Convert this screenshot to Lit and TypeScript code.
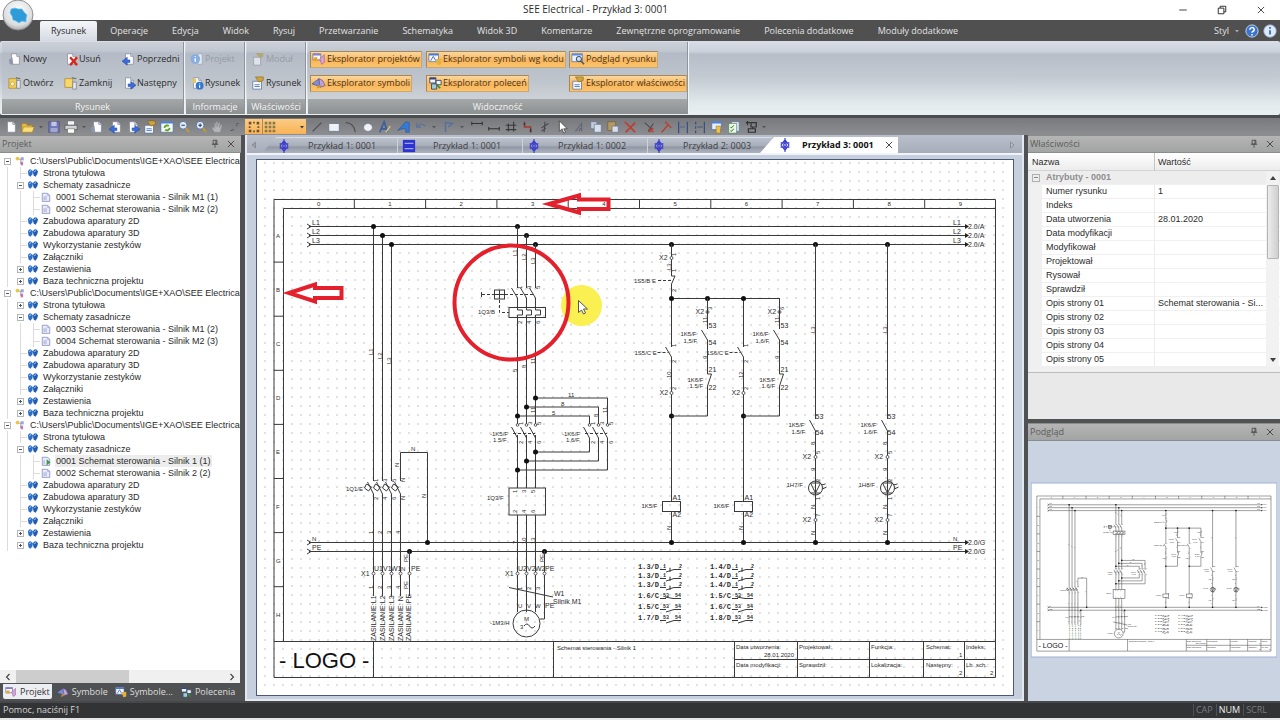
import { LitElement, html, svg, css, nothing, TemplateResult } from "lit";
import { customElement, property } from "lit/decorators.js";
import { classMap } from "lit/directives/class-map.js";

type Frag = TemplateResult<2>;

/* ------------------------------------------------------------------ icons */

const page = svg`<path d="M4 2h6l3 3v9H4z" fill="#fdfdff" stroke="#7f8596" stroke-width=".8"/><path d="M10 2v3h3" fill="#d5dbe8" stroke="#7f8596" stroke-width=".8"/>`;
const blueArrow = svg`<path d="M7 9h3V6l6 4.500-6 4.500v-3H7z" fill="#3a6cd8" stroke="#173a94" stroke-width=".5"/>`;
const blueBack = svg`<path d="M9 9H6V6L0 10.500 6 15v-3h3z" fill="#3a6cd8" stroke="#173a94" stroke-width=".5"/>`;
const folder = svg`<path d="M1 4h5l1 2h6v8H1z" fill="#e9b93e" stroke="#a07a1c" stroke-width=".7"/><path d="M3 8h12l-2 6H1z" fill="#f9dd7c" stroke="#a07a1c" stroke-width=".6"/>`;
const diamond = svg`<path d="M8 0v16M3 5.500h10M3 10.500h10M8 2l4.500 6-4.500 6-4.500-6z" fill="none" stroke="#3a3ccf" stroke-width="1.300"/><circle cx="8" cy="8" r="2" fill="none" stroke="#3a3ccf"/>`;

const ICONS: Record<string, Frag> = {
  page,
  open: folder,
  newDoc: svg`${page}<path d="M1 9l4-3 1 8-4 0z" fill="#8f96a8"/>`,
  remove: svg`${page}<path d="M7 6l8 9M15 6l-8 9" stroke="#d8261c" stroke-width="2.600"/>`,
  prev: svg`${page}${blueBack}`,
  next: svg`${page}${blueArrow}`,
  openPrj: svg`<path d="M1 3h9v11H1z" fill="#f2cd58" stroke="#a88424" stroke-width=".8"/><circle cx="5" cy="9" r="2.300" fill="#fff6c8" stroke="#a88424" stroke-width=".6"/><path d="M10 5h4v9h-4z" fill="#e8ecf4" stroke="#6e7688" stroke-width=".8"/><path d="M9 2l5 1" stroke="#555"/>`,
  closePrj: svg`<path d="M1 3h9v10H1z" fill="#f7d866" stroke="#a88424" stroke-width=".8"/><path d="M10 7h4v8h-4z" fill="#e8ecf4" stroke="#6e7688" stroke-width=".8"/><path d="M9 2l5 1" stroke="#555"/>`,
  infoGray: svg`<path d="M9 2h5v12H9z" fill="#e3e8f0" stroke="#9aa4b8" stroke-width=".8"/><circle cx="6" cy="8" r="5.500" fill="#86aede"/><path d="M6 7v4M6 4.500v1" stroke="#fff" stroke-width="1.600"/>`,
  infoDoc: svg`${page}<path d="M3 3h4v5H3z" fill="#e6c75a"/><circle cx="11" cy="11" r="4.500" fill="#3577cf"/><path d="M11 10.500v3M11 8.500v1" stroke="#fff" stroke-width="1.400"/>`,
  propGray: svg`<path d="M3 6h8v9H3z" fill="#dfe3ea" stroke="#9096a2" stroke-width=".8"/><path d="M5 1h9v4l-4 2z" fill="#b0a878"/>`,
  prop: svg`<path d="M2 6h10v9H2z" fill="#f5f8fd" stroke="#52678f" stroke-width=".8"/><path d="M5 1h9v4L9 7z" fill="#d2a437" stroke="#7a5a14" stroke-width=".6"/><path d="M4 10h6M4 12h6" stroke="#4a78c8"/>`,
  expPrj: svg`<path d="M1 2h9v7H1z" fill="#f6f8ff" stroke="#54688f" stroke-width=".8"/><path d="M1 2h9v2H1z" fill="#8a7ad8"/><path d="M2 6h4v4H2z" fill="#e2a62c"/><path d="M9 8l5-5v9l-3 2z" fill="#d7a2d8" stroke="#8a5490" stroke-width=".6"/>`,
  expSym: svg`<path d="M0 9l8-6 1 9z" fill="#7f8ed4" stroke="#384a9a" stroke-width=".7"/><path d="M8 3l4 2 3 6-6 2z" fill="#b9a4dd" stroke="#5a4490" stroke-width=".7"/><path d="M6 14l4-4" stroke="#d29a22" stroke-width="2"/>`,
  expCode: svg`<path d="M1 2h11v9H1z" fill="#f3f7ff" stroke="#4d6fa8" stroke-width=".8"/><path d="M1 2h11v2H1z" fill="#4a7ad8"/><path d="M3 10l3-5 3 5" fill="none" stroke="#3d62b4"/><path d="M9 8h6v6l-4 1z" fill="#e4b23a"/>`,
  expCmd: svg`<path d="M2 2h7v6H2zM9 5h6v5H9z" fill="#eef2fa" stroke="#39465f" stroke-width="1"/><path d="M2 2h7v2H2z" fill="#33457c"/><path d="M4 9h6v6H4z" fill="#9fcbe0" stroke="#39465f"/><path d="M10 10l4 4" stroke="#3d8a2a" stroke-width="2"/>`,
  preview: svg`<path d="M1 2h12v9H1z" fill="#eaf2ff" stroke="#506fa5" stroke-width=".8"/><path d="M1 2h12v2H1z" fill="#5f8ade"/><circle cx="9" cy="8" r="3" fill="#bfe0f6" stroke="#334"/><path d="M11 10l4 4" stroke="#555" stroke-width="1.800"/>`,
  save: svg`<path d="M2 2h12v12H2z" fill="#6e76b8" stroke="#4a4f86" stroke-width=".8"/><path d="M5 2h6v5H5z" fill="#c2c6e0"/><path d="M4 9h8v5H4z" fill="#a2a7d0"/>`,
  print: svg`<path d="M4 1h8v5H4z" fill="#f6f6f6" stroke="#555" stroke-width=".6"/><path d="M1 6h14v5H1z" fill="#d0d2d8" stroke="#4b4b4b" stroke-width=".8"/><path d="M4 10h8v5H4z" fill="#fff" stroke="#555" stroke-width=".6"/>`,
  refresh: svg`<path d="M1 2h14v12H1z" fill="#f4faf4" stroke="#4a70a8" stroke-width=".8"/><path d="M1 2h14v2H1z" fill="#4d80dc"/><path d="M5 9a3 3 0 0 1 5-2M11 9a3 3 0 0 1-5 2" fill="none" stroke="#5ea021" stroke-width="2"/>`,
  zoomOut: svg`<circle cx="7" cy="6" r="4.500" fill="#dcebfb" stroke="#4f6998"/><path d="M10 9l4 5" stroke="#c49a3a" stroke-width="2"/><path d="M5 6h4" stroke="#223"/>`,
  zoomIn: svg`<circle cx="7" cy="6" r="4.500" fill="#dcebfb" stroke="#4f6998"/><path d="M10 9l4 5" stroke="#c49a3a" stroke-width="2"/><path d="M5 6h4M7 4v4" stroke="#223"/>`,
  hand: svg`<path d="M4 14l-3-5 1-1 2 2V4l1-1 1 5V2l1.500 0v6l1-5 1.500 0-.5 6 2-4 1 1-2 8z" fill="#b5b5b8" stroke="#8f8f94" stroke-width=".4"/>`,
  fit: svg`<path d="M3 12h3v-3M10 7V4h3" fill="none" stroke="#4b4b4d" stroke-dasharray="2 1"/>`,
  snap: svg`<path d="M2 2h3v3H2zM7 2h2v2H7zM11 2h3v3h-3zM2 11h3v3H2zM11 11h3v3h-3zM7 12h2v2H7zM2 7h2v2H2zM12 7h2v2h-2z" fill="#6a5238"/>`,
  grid: svg`<path d="M2 2h3v3H2zM6.500 2h3v3h-3zM11 2h3v3h-3zM2 6.500h3v3H2zM6.500 6.500h3v3h-3zM11 6.500h3v3h-3zM2 11h3v3H2zM6.500 11h3v3h-3zM11 11h3v3h-3z" fill="#857a4c"/>`,
  line: svg`<path d="M3 13L13 3" stroke="#4d4e52" stroke-width="1.400"/>`,
  rect: svg`<path d="M2 4h12v9H2z" fill="#eef1f6" stroke="#5f6b86" stroke-width=".8"/>`,
  arc: svg`<path d="M2 3q9 0 11 11" fill="none" stroke="#4d4e52" stroke-width="1.200"/>`,
  ellipse: svg`<ellipse cx="8" cy="8.500" rx="5" ry="4.500" fill="#eff2f7" stroke="#5f6b86" stroke-width=".6"/>`,
  textEdit: svg`<path d="M2 14L7 2l4 12M4 10h6" fill="none" stroke="#3c5f9c" stroke-width="2"/><path d="M9 14l5-7" stroke="#d8c27c" stroke-width="1.600"/>`,
  textFill: svg`<path d="M1 12L10 2l4 1v11h-4v-4H6z" fill="#3579d4" stroke="#1f4f9c" stroke-width=".6"/>`,
  undo: svg`<path d="M3 3v5h5M3 8q5-6 10-1" fill="none" stroke="#5f7299" stroke-width="1.600"/>`,
  redo: svg`<path d="M4 14V3l8 1-5 4" fill="none" stroke="#55709f" stroke-width="1.600"/>`,
  wireTop: svg`<path d="M2 4h12M2 2v4M14 2v4" stroke="#333" stroke-width="1.300"/>`,
  wireLow: svg`<path d="M2 10h12M2 8v4M14 8v4" stroke="#333" stroke-width="1.300"/>`,
  wire3: svg`<path d="M2 6h12M2 11h12M5 4v9M11 2v11" stroke="#3a3a3c" stroke-width="1.300"/>`,
  step: svg`<path d="M4 2v6h7v6" fill="none" stroke="#a23a30" stroke-width="1.600"/><path d="M4 3v3M11 10v4" stroke="#333" stroke-width="1.600"/>`,
  cut: svg`<path d="M8 2L7 14M4 9l8-5M4 13l5-4" stroke="#43464e" stroke-width="1.200"/>`,
  cursor: svg`<path d="M5 1v12l3-3 2 5 2-1-2-4h4z" fill="#fff" stroke="#333" stroke-width=".8"/>`,
  mirror: svg`<path d="M4 13L11 4v9M8 13l2-4" fill="none" stroke="#62687a" stroke-width="1.300"/>`,
  copy: svg`<path d="M2 2h7v8H2z" fill="#c3cad8" stroke="#5f7096" stroke-width=".7"/><path d="M6 5h8v9H6z" fill="#d9dfea" stroke="#5f7096" stroke-width=".7"/>`,
  paste: svg`<path d="M2 2h9v10H2z" fill="#b39a62" stroke="#6f5a2a" stroke-width=".7"/><path d="M7 7h7v7H7z" fill="#d9dfea" stroke="#5f7096" stroke-width=".7"/>`,
  redX: svg`<path d="M2 2l12 12M14 3L3 14" stroke="#bf3c30" stroke-width="2"/>`,
  crossDel: svg`<path d="M3 3l9 8M13 4L7 13" stroke="#4a4c50" stroke-width="1.300"/><path d="M8 9l5 5M13 9l-5 5" stroke="#bf3c30" stroke-width="1.600"/>`,
  tee: svg`<path d="M3 14l8-9M7 2l7 7" stroke="#bf3c30" stroke-width="1.600"/>`,
  alignA: svg`<path d="M3 2v13M13 2v13" stroke="#34508c" stroke-width="1.400"/><path d="M5 8h6" stroke="#34508c" stroke-dasharray="2 1"/>`,
  alignB: svg`<path d="M3 2v3M3 7v3M3 12v3M13 2v13" stroke="#34508c" stroke-width="1.400"/><path d="M5 8h6" stroke="#34508c"/>`,
  db: svg`<path d="M2 2h11v9H2z" fill="#e6effb" stroke="#446dab" stroke-width=".8"/><path d="M2 2h11v2H2z" fill="#4d80dc"/><path d="M7 7h5v8H7z" fill="#ecc04a" stroke="#93701a" stroke-width=".6"/>`,
  check: svg`<path d="M5 2h9v11H5z" fill="#dfe7f5" stroke="#446dab" stroke-width=".7"/><path d="M2 4h9v11H2z" fill="#eff8ef" stroke="#4b7b4b" stroke-width=".7"/><path d="M4 8l1 1 3-3M4 12l1 1 3-3" fill="none" stroke="#3f9a30" stroke-width="1.200"/>`,
  plug: svg`<path d="M2 3h5M4 1v5M8 3h6v5H8zM5 10h8v4H5zM10 8v2" fill="none" stroke="#303236" stroke-width="1.400"/>`,
  root: svg`<circle cx="4" cy="4" r="3" fill="#f0c63f"/><path d="M9 2h5v5H9z" fill="#9aa6e0"/><path d="M9 9h4v6H9z" fill="#c77bb4"/><path d="M6 5h3v7h2" fill="none" stroke="#777" stroke-width=".8"/>`,
  bulbs: svg`<path d="M0 7q0-5 4-5l4 3-1 5-3 4-3-2z" fill="#2d6fc4"/><path d="M8 7q0-5 5-5l3 3-1 4-3 5-3-2z" fill="#1f5cb3"/><path d="M2 6l3-2M10 6l3-2" stroke="#a9d2ff" stroke-width="1.600"/>`,
  sheet: svg`<path d="M2 2h8l4 3v10H2z" fill="#e9ecfb" stroke="#6a6fa8" stroke-width="1"/><path d="M5 7v6M8 6v7" stroke="#7c82bd" stroke-width="1"/><path d="M10 2v4h4" fill="#a8adda"/>`,
  sheetOn: svg`<path d="M2 2h8l4 3v10H2z" fill="#e9ecfb" stroke="#6a6fa8" stroke-width="1"/><path d="M5 7v6" stroke="#7c82bd"/><path d="M9 5l6 5-6 5z" fill="#3e9a3c"/>`,
  diamond,
  block: svg`<path d="M1 1h14v14H1z" fill="#2c33cf"/><path d="M3 5h10M3 11h10" stroke="#9ba2ff" stroke-width="1.500"/>`,
  help: svg`<circle cx="8" cy="8" r="7" fill="#3b74cf" stroke="#cfe0fa"/><path d="M5.500 6.500a2.500 2.300 0 1 1 3.500 2q-1 .5-1 1.500M8 11.500v1.500" fill="none" stroke="#fff" stroke-width="1.700"/>`,
  info: svg`<circle cx="8" cy="8" r="7" fill="#dfeaf9" stroke="#a9c3e8"/><path d="M8 7v5M8 3.500v2" stroke="#2f66c4" stroke-width="2"/>`,
  pin: svg`<path d="M5 2h6v6H5zM3 8.500h10M8 9v5M9.500 2v6" fill="none" stroke="#4c4c4c" stroke-width="1.400"/>`,
  close: svg`<path d="M3 3l10 10M13 3L3 13" stroke="#4c4c4c" stroke-width="1.600"/>`,
  down: svg`<path d="M4 6l4 5 4-5z" fill="#3c3c3e"/>`,
  downLight: svg`<path d="M4 6l4 5 4-5z" fill="#a8a8a8"/>`,
  chevL: svg`<path d="M11 2L5 8l6 6" fill="none" stroke="#404040" stroke-width="2.200"/>`,
  chevR: svg`<path d="M5 2l6 6-6 6" fill="none" stroke="#404040" stroke-width="2.200"/>`,
  triL: svg`<path d="M11 2L4 8l7 6z" fill="#9a9fa8" stroke="#6d7179"/>`,
  triR: svg`<path d="M5 2l7 6-7 6z" fill="#b9bec8" stroke="#62666e"/>`,
  triU: svg`<path d="M2 12l6-8 6 8z" fill="#404040"/>`,
  triD: svg`<path d="M2 4l6 8 6-8z" fill="#404040"/>`,
  min: svg`<path d="M2 8h12" stroke="#444" stroke-width="1.600"/>`,
  max: svg`<path d="M2 5h9v9H2zM5 5V2h9v9h-3" fill="none" stroke="#333" stroke-width="1.600"/>`,
};

const icon = (name: string, size = "m") =>
  html`<svg class="icon ${size}" viewBox="0 0 16 16" aria-hidden="true">${ICONS[name]}</svg>`;

/* -------------------------------------------------------------- schematic */

const L = (...p: number[]) => {
  let d = `M${p[0]} ${p[1]}`;
  for (let i = 2; i < p.length; i += 2) d += `L${p[i]} ${p[i + 1]}`;
  return svg`<path class="w" d=${d} />`;
};
const dot = (x: number, y: number) => svg`<circle cx=${x} cy=${y} r="2.500" fill="#111" />`;
const ring = (x: number, y: number) => svg`<circle class="r" cx=${x} cy=${y} r="1.500" />`;
/* Terminal, rail and supply names are set one step larger than wire numbers. */
const size = (s: string) => (/^(ZASILANIE|X\d|[UVWL]\d|PE|A\d|\d\d$|\d\.0)/.test(s) ? "b" : "t");
const T = (x: number, y: number, s: string, c = size(s)) => svg`<text class=${c} x=${x} y=${y}>${s}</text>`;
const V = (x: number, y: number, s: string, c = s.startsWith("ZAS") ? "b" : "t") =>
  svg`<text class=${c} transform="translate(${x} ${y}) rotate(-90)">${s}</text>`;
const dash = (x1: number, y: number, x2: number) =>
  svg`<path class="w" stroke-dasharray="3 2" d="M${x1} ${y}H${x2}" />`;

const COL = 71.3;
const ROW = 54.1;

const frame = () => svg`
  <path class="f" d="M274 199.500H995.500V677.500H274ZM283.500 641V208.500H995.500M274 641.500H995.500M373.500 641V677M553.500 641V677M734.500 641V677M797.500 641V677M869.500 641V677M923.500 641V677M964.500 641V677M734 659.500H995" />
  ${[...Array(9).keys()].map((i) => L(283 + COL * (i + 1), 199, 283 + COL * (i + 1), 208))}
  ${[...Array(10).keys()].map((i) => T(317 + COL * i, 206, `${i}`))}
  ${[...Array(7).keys()].map((i) => L(274, 208 + ROW * (i + 1), 283, 208 + ROW * (i + 1)))}
  ${[..."ABCDEFGH"].map((c, i) => T(276, 238 + ROW * i, c))}
  ${T(279, 668, "- LOGO -", "logo")}
  ${T(557, 650, "Schemat sterowania - Silnik 1")}
  ${T(736, 649, "Data utworzenia:")} ${T(764, 657, "28.01.2020")} ${T(736, 667, "Data modyfikacji:")}
  ${T(799, 649, "Projektował:")} ${T(799, 667, "Sprawdził:")}
  ${T(871, 649, "Funkcja:")} ${T(871, 667, "Lokalizacja:")}
  ${T(926, 649, "Schemat:")} ${T(959, 657, "1")} ${T(926, 667, "Następny:")} ${T(959, 675, "2")}
  ${T(966, 649, "Indeks:")} ${T(966, 667, "Lb. sch.:")} ${T(990, 675, "2")}`;

const rails = () => svg`
  ${[["L1", 226, "2.0/A"], ["L2", 235, "2.0/A"], ["L3", 244, "2.0/A"], ["N", 542, "2.0/G"], ["PE", 551, "2.0/G"]].map(
    ([n, yy, ref]) => {
      const y = (yy as number) + 0.5;
      return svg`${L(309, y, 966, y)}${L(307, y - 2.5, 311, y, 307, y + 2.5)}
      ${T(312, y - 1.5, n as string)}${T(953, y - 1.5, n as string)}
      <path d="M965 ${y - 2.5}l4 2.500l-4 2.500z" fill="#222" />${T(968, y + 2, ref as string)}`;
    }
  )}`;

const poles = (x: number, y: number) => svg`
  ${[0, 9, 18].map(
    (d, i) => svg`${L(x + d - 6, y, x + d, y + 11)}
    <circle class="r" cx=${x + d} cy=${y - 2} r="1.300" />
    ${V(x + d + 5, y - 2, ["1", "3", "5"][i])}${V(x + d + 5, y + 17, ["2", "4", "6"][i])}`
  )}`;

const supply = () => svg`
  ${[373.5, 382.5, 391.5, 400.5].map(
    (x, i) => svg`
    ${i < 3 ? L(x, 226 + 9 * i, x, 481) : L(x, 481, x, 452.5, 427.5, 452.5, 427.5, 542)}
    ${i < 3 ? dot(x, 226.5 + 9 * i) : nothing}
    ${L(x - 6, 482, x, 494, x, 596)}
    <path class="w" d="M${x - 7} 484l5 3l-3 4l-4 -3z" />
    ${V(x + 4, 482, ["1", "3", "5", "N"][i])}${V(x + 4, 500, ["2", "4", "6", "N"][i])}
    ${V(x - 1, 534, `${i + 1}`)}${V(x - 1, 589, `${i + 1}`)}
    ${ring(x, 573.5)}
    ${V(x + 2, 641, ["ZASILANIE:L1", "ZASILANIE:L2", "ZASILANIE:L3", "ZASILANIE: N"][i])}`
  )}
  ${V(373, 355, "L1")}${V(382, 359, "L2")}${V(391, 364, "L3")}
  ${T(411, 451, "N")}${V(399, 467, "N")}${V(426, 498, "N")}
  ${T(346, 491, "1Q1/E")}${dot(427.5, 542.5)}
  ${dot(409.5, 551.5)}${L(409.5, 551, 409.5, 596)}${ring(409.5, 573.5)}
  ${V(408, 562, "PE")}${V(408, 589, "PE")}${V(411, 641, "ZASILANIE:PE")}
  ${T(361, 576, "X1")}${T(374, 571, "U1")}${T(383, 571, "V1")}${T(391, 571, "W1")}${T(401, 571, "N")}${T(411, 571, "PE")}`;

const motor = () => svg`
  ${[517.5, 526.5, 535.5].map(
    (x, i) => svg`
    ${dot(x, 226.5 + 9 * i)}${L(x, 226 + 9 * i, x, 288)}
    ${L(x - 6, 288, x, 298, x, 310, x + 5, 310, x + 5, 315, x, 315, x, 424)}
    ${L(x, 435, x, 488)}${L(x, 515, x, 574)}${L(x, 574, x, 612)}
    ${V(x - 1, 256 + 4 * i, ["L1", "L2", "L3"][i])}${V(x - 1, 372 - 4 * i, ["5", "8", "11"][i])}
    ${V(x + 4, 289, ["1", "3", "5"][i])}${V(x + 4, 324, ["2", "4", "6"][i])}
    ${V(x - 1, 493, ["1", "3", "5"][i])}${V(x - 1, 513, ["2", "4", "6"][i])}
    ${V(x - 1, 544, ["7", "10", "13"][i])}${V(x + 4, 590, `${i + 1}`)}
    ${ring(x, 573.5)}`
  )}
  ${poles(517.5, 427)}${poles(589.5, 427)}${dash(513, 433.5, 535)}${dash(585, 433.5, 607)}
  ${L(535.5, 398, 607.5, 398, 607.5, 424)}${L(607.5, 438, 607.5, 470, 517.5, 470)}
  ${L(526.5, 407, 598.5, 407, 598.5, 424)}${L(598.5, 438, 598.5, 461, 526.5, 461)}
  ${L(517.5, 416, 589.5, 416, 589.5, 424)}${L(589.5, 438, 589.5, 452, 535.5, 452)}
  ${dot(535.5, 398)}${dot(526.5, 407)}${dot(517.5, 416)}${dot(535.5, 452)}${dot(526.5, 461)}${dot(517.5, 470)}
  ${T(568, 397, "11", "t")}${T(561, 406, "8")}${T(552, 415, "5")}${V(607, 413, "11")}${V(598, 417, "8")}${V(535, 413, "11")}
  <rect class="w" x="509" y="307.500" width="36.500" height="10" />
  <rect class="w" x="494.500" y="290" width="10" height="9" />${L(494, 294.5, 505, 294.5)}${L(499.5, 290, 499.5, 299)}
  ${L(481.5, 292, 481.5, 297)}${dash(482, 294.5, 494)}${dash(505, 294.5, 535)}
  <path class="w" stroke-dasharray="3 2" d="M499.500 300V312.500H509" />
  ${T(478, 314, "1Q3/B")}
  ${T(490, 436, "-1K5/F")}${T(493, 442, "1.5/F")}${T(562, 436, "-1K6/F")}${T(566, 442, "1.6/F")}
  <rect class="w" x="509" y="488" width="36.500" height="27" />${T(487, 500, "1Q3/F")}
  ${dot(544.5, 551.5)}${L(544.5, 551, 544.5, 619, 540, 619)}${ring(544.5, 573.5)}${V(544, 562, "PE")}
  ${T(505, 576, "X1")}${T(518, 571, "U2")}${T(527, 571, "V2")}${T(535, 571, "W2")}${T(545, 571, "PE")}
  ${L(509, 587.5, 553, 597)}${T(554, 596, "W1")}${T(553, 604, "Silnik M1", "b")}
  ${T(518, 608, "U")}${T(527, 608, "V")}${T(535, 608, "W")}${T(545, 608, "PE")}
  <circle class="w" cx="526.500" cy="623.500" r="13.500" />${T(524, 621, "M")}${T(520, 629, "3")}
  <path class="w" d="M524 626q3 -4 5.500 0t5.500 0" />${T(490, 625, "-1M3/H")}`;

const branch = (x: number, first: string, a: string, b: string, c: string) => svg`
  ${T(x - 12, 314, "X2")}${ring(x, 312)}${L(x, 298, x, 329)}${V(x + 4, 310, first)}${V(x - 1, 323, "11")}
  ${T(x + 1, 328, "53")}${T(x + 1, 345, "54")}${L(x - 6, 330, x, 340, x, 374)}${V(x - 1, 359, "9")}
  ${T(x - 27, 336, a)}${T(x - 24, 343, b)}
  ${T(x + 1, 372, "21")}${T(x + 1, 390, "22")}${L(x, 374, x + 4, 374, x, 386, x, 416, x - 36, 416)}
  ${T(x - 20, 382, c)}${T(x - 18, 388, b)}`;

const coil = (x: number, push: string, name: string, n: string) => svg`
  ${L(x, 298, x, 347)}${L(x - 6, 347, x, 357, x, 501)}
  ${V(x + 4, 347, "1")}${V(x + 4, 363, "2")}${V(x - 1, 378, n)}
  ${T(x - 37, 355, push)}${dash(x - 14, 352.5, x - 3)}
  ${T(x - 12, 395, "X2")}${ring(x, 393)}${V(x + 4, 390, "2")}
  ${dot(x, 298.5)}${dot(x, 416)}${T(x + 1, 500, "A1")}${T(x + 1, 517, "A2")}
  <rect class="w" x=${x - 9} y="501.500" width="18" height="10" />${L(x, 511, x, 542)}${dot(x, 542.5)}
  ${T(x - 30, 508, name)}${V(x - 1, 530, "N")}`;

const lamp = (x: number, k: string, ref: string, name: string) => svg`
  ${dot(x, 244.5)}${L(x, 244, x, 419)}${V(x - 1, 333, "L3")}
  ${T(x, 419, "53")}${T(x, 435, "54")}${L(x - 6, 420, x, 431, x, 542)}${dot(x, 542.5)}
  ${T(x - 27, 427, k)}${T(x - 24, 434, ref)}
  ${V(x - 1, 445, "8")}${T(x - 13, 459, "X2")}${ring(x, 457)}${V(x + 4, 454, "5")}${V(x - 1, 471, "9")}
  <circle class="w" cx=${x} cy="488" r="7" /><path class="w" d="M${x - 5} 483H${x + 5}L${x} 493ZM${x - 5} 493H${x + 5}M${x + 7} 489l4 -2M${x + 6} 485l4 -1" />
  ${T(x - 29, 487, name)}${V(x + 4, 482, "2")}${V(x + 4, 500, "1")}
  ${V(x - 1, 509, "N")}${T(x - 13, 522, "X2")}${ring(x, 520)}${V(x + 4, 517, "7")}${V(x - 1, 535, "N")}`;

const crossRefs = (x: number, refs: string[]) => svg`
  ${refs.map((r, i) => {
    const y = [569, 578, 587, 598, 609, 620][i];
    const nc = i === 3;
    return svg`${T(x, y, r, "m")}
      ${T(x + 25, y - 1, i < 3 ? "1" : "53", "s")}${T(x + (i < 3 ? 41 : 37), y - 1, i < 3 ? "2" : "54", "s")}
      ${L(x + 22, y + 0.5, x + 28, y + 0.5)}
      ${nc ? L(x + 27, y - 1, x + 35, y + 0.5, x + 43, y + 0.5) : L(x + 28, y + 3, x + 36, y + 0.5, x + 43, y + 0.5)}
      ${i < 3 ? L(x + 32, y - 1, x + 32, y + 3) : nothing}`;
  })}`;

const control = () => svg`
  ${dot(671.5, 244.5)}${L(671.5, 244, 671.5, 276, 675, 276, 671.5, 284, 671.5, 298)}
  ${T(659, 260, "X2")}${ring(671.5, 258)}${V(676, 256, "1")}${V(671, 270, "L3")}${V(676, 272, "1")}${V(676, 292, "2")}
  ${T(634, 283, "1S5/B E")}${dash(658, 280.5, 672)}
  ${L(671.5, 298.5, 779.5, 298.5)}${dot(707.5, 298.5)}
  ${coil(671.5, "1S5/C E", "1K5/F", "10")}${coil(743.5, "1S6/C E", "1K6/F", "12")}
  ${branch(707.5, "3", "1K5/F", "1.5/F", "1K6/F")}${branch(779.5, "6", "1K6/F", "1.6/F", "1K5/F")}
  ${lamp(815.5, "1K5/F", "1.5/F", "1H7/F")}${lamp(887.5, "1K6/F", "1.6/F", "1H8/F")}
  ${crossRefs(638, ["1.3/D", "1.3/D", "1.3/D", "1.6/C", "1.5/C", "1.7/D"])}
  ${crossRefs(710, ["1.4/D", "1.4/D", "1.4/D", "1.5/C", "1.6/C", "1.8/D"])}`;

const annotations = () => svg`
  <circle cx="581.500" cy="305.500" r="20.500" fill="#fbf052" />
  <path d="M578.500 300.500v12l3 -2.500l2 4l2 -1l-2 -4h4z" fill="#fff" stroke="#555" stroke-width="1" />
  <circle cx="511.500" cy="302.500" r="57" class="red" />
  <path class="red" d="M549 204L579 195.500V199.500H608.500V209H579V212.500Z" />
  <path class="red" d="M289 293L315 284.500V288H341.500V298H315V301.500Z" />`;

@customElement("schematic-sheet")
class SchematicSheet extends LitElement {
  @property({ type: Boolean, reflect: true }) preview = false;

  static styles = css`
    :host { display: block; min-width: 0; min-height: 0; }
    svg { display: block; width: 100%; height: 100%; }
    .w { fill: none; stroke: #3a3a3a; stroke-width: 1; }
    .r { fill: #fff; stroke: #3a3a3a; stroke-width: 0.8; }
    .f { fill: none; stroke: #3a3a3a; stroke-width: 1; }
    text { font-family: "Liberation Sans", Arial, sans-serif; fill: #2c2c2c; }
    .t { font-size: 6px; }
    .b { font-size: 7px; }
    .s { font: bold 5px "Liberation Mono", monospace; }
    .m { font: bold 7px "Liberation Mono", monospace; }
    .logo { font-size: 22px; fill: #111; }
    .paper { fill: #fff; stroke: #4b5878; }
    .red { fill: none; stroke: #e3202b; stroke-width: 4; }
    :host([preview]) .w, :host([preview]) .f { stroke-width: 1.5; }
    :host([preview]) .paper { stroke: #9fb2d6; stroke-width: 3; }
  `;

  render() {
    return html`<svg viewBox="256 159 758 537" role="img" aria-label="Schemat sterowania - Silnik 1">
      <defs>
        <pattern id="dots" x="260.500" y="167.500" width="9" height="9" patternUnits="userSpaceOnUse">
          <rect x="4" y="4" width="1" height="1" fill="#8a8a8a" />
        </pattern>
      </defs>
      <rect class="paper" x="256.500" y="159.500" width="757" height="536" />
      ${this.preview ? nothing : svg`<rect x="260" y="160" width="750" height="532" fill="url(#dots)" />`}
      ${frame()}${rails()}${supply()}${motor()}${control()}
      ${this.preview ? nothing : annotations()}
    </svg>`;
  }
}

/* -------------------------------------------------------------- app data */

const MENU = ["Rysunek", "Operacje", "Edycja", "Widok", "Rysuj", "Przetwarzanie", "Schematyka", "Widok 3D", "Komentarze", "Zewnętrzne oprogramowanie", "Polecenia dodatkowe", "Moduły dodatkowe"];

interface Cmd { icon: string; label: string; off?: boolean; on?: boolean }
const GROUPS: { title: string; cls: string; cmds: Cmd[] }[] = [
  { title: "Rysunek", cls: "g-draw", cmds: [
    { icon: "newDoc", label: "Nowy" }, { icon: "remove", label: "Usuń" }, { icon: "prev", label: "Poprzedni" },
    { icon: "openPrj", label: "Otwórz" }, { icon: "closePrj", label: "Zamknij" }, { icon: "next", label: "Następny" }] },
  { title: "Informacje", cls: "g-one", cmds: [{ icon: "infoGray", label: "Projekt", off: true }, { icon: "infoDoc", label: "Rysunek" }] },
  { title: "Właściwości", cls: "g-one", cmds: [{ icon: "propGray", label: "Moduł", off: true }, { icon: "prop", label: "Rysunek" }] },
  { title: "Widoczność", cls: "g-view", cmds: [
    { icon: "expPrj", label: "Eksplorator projektów", on: true }, { icon: "expCode", label: "Eksplorator symboli wg kodu", on: true }, { icon: "preview", label: "Podgląd rysunku", on: true },
    { icon: "expSym", label: "Eksplorator symboli", on: true }, { icon: "expCmd", label: "Eksplorator poleceń", on: true }, { icon: "prop", label: "Eksplorator właściwości", on: true }] },
];

const TOOLS = "page open v save print v newDoc | prev next prop refresh zoomOut zoomIn hand fit | SNAP | line rect arc ellipse textEdit | textFill undo v | redo v | wireTop wireLow wire3 step cut cursor mirror copy paste redX | crossDel tee alignA alignB db check plug v".split(" ");

interface TreeNode { t: string; lvl: number; ex?: "+" | "-"; ic?: string; sel?: boolean }
const project = (a: string, b: string, title?: "+", on = false): TreeNode[] => [
  { t: "C:\\Users\\Public\\Documents\\IGE+XAO\\SEE Electrical\\", lvl: 0, ex: "-", ic: "root" },
  { t: "Strona tytułowa", lvl: 1, ex: title },
  { t: "Schematy zasadnicze", lvl: 1, ex: "-" },
  { t: a, lvl: 2, ic: on ? "sheetOn" : "sheet", sel: on },
  { t: b, lvl: 2, ic: "sheet" },
  { t: "Zabudowa aparatury 2D", lvl: 1 }, { t: "Zabudowa aparatury 3D", lvl: 1 },
  { t: "Wykorzystanie zestyków", lvl: 1 }, { t: "Załączniki", lvl: 1 },
  { t: "Zestawienia", lvl: 1, ex: "+" }, { t: "Baza techniczna projektu", lvl: 1, ex: "+" },
];
const TREE: TreeNode[] = [
  ...project("0001 Schemat sterowania - Silnik M1 (1)", "0002 Schemat sterowania - Silnik M2 (2)"),
  ...project("0003 Schemat sterowania - Silnik M1 (2)", "0004 Schemat sterowania - Silnik M2 (3)", "+"),
  ...project("0001 Schemat sterowania - Silnik 1 (1)", "0002 Schemat sterowania - Silnik 2 (2)", undefined, true),
];

const DOCS = [["diamond", "Przykład 1: 0001"], ["block", "Przykład 1: 0001"], ["diamond", "Przykład 1: 0002"], ["diamond", "Przykład 2: 0003"], ["diamond", "Przykład 3: 0001"]];

const PROPS: [string, string][] = [
  ["Numer rysunku", "1"], ["Indeks", ""], ["Data utworzenia", "28.01.2020"], ["Data modyfikacji", ""], ["Modyfikował", ""],
  ["Projektował", ""], ["Rysował", ""], ["Sprawdził", ""], ["Opis strony 01", "Schemat sterowania - Si..."],
  ["Opis strony 02", ""], ["Opis strony 03", ""], ["Opis strony 04", ""], ["Opis strony 05", ""],
];

@customElement("app-root")
class AppRoot extends LitElement {
  static styles = css`
    :host { position: relative; display: flex; flex-direction: column; height: 100vh; overflow: hidden; background: #505153; color: #2b2b2b; font: 9px/12px "Open Sans", "Noto Sans", sans-serif; }
    * { box-sizing: border-box; }
    button { border: 0; padding: 0; margin: 0; background: none; font: inherit; color: inherit; display: flex; align-items: center; white-space: nowrap; }
    h1, h2, ul { margin: 0; padding: 0; font: inherit; list-style: none; }
    .icon { width: 14px; height: 14px; flex: none; display: block; }
    .icon.xs { width: 8px; height: 8px; }
    .icon.s { width: 10px; height: 10px; }

    .title { flex: none; height: 20px; background: #fff; display: flex; align-items: center; }
    .title h1 { flex: 1; text-align: center; padding: 0 8px 2px 36px; font-size: 10px; }
    .title button { width: 39px; height: 18px; justify-content: center; }
    .title .orb { position: absolute; top: 0; left: 2px; width: 32px; height: 31px; z-index: 1; }
    .orb svg { width: 32px; height: 31px; }

    .menu { flex: none; height: 21px; display: flex; padding-left: 40px; background: #505050; color: #e2e2e2; }
    .menu .tab { height: 21px; padding: 0 11px; margin-right: 2px; }
    .menu .tab.on { background: linear-gradient(#f4f6f9, #d5dae3); color: #2b2b2b; border-radius: 2px 2px 0 0; margin-top: 1px; height: 20px; }
    .menu .end { margin-left: auto; display: flex; align-items: center; gap: 4px; padding-right: 3px; }

    .ribbon { flex: none; height: 74px; display: flex; gap: 2px; padding: 1px 2px; background: linear-gradient(#d8dde6 0, #ccd2dc 14%, #b7bec9 18%, #c3cad2 50%, #e2eaec 85%, #e8f0f3); border-radius: 2px; }
    .group { display: flex; flex-direction: column; border-right: 1px solid #8f949b; box-shadow: 1px 0 #f1f4f7; background: linear-gradient(#cbd0d9 0, #c2c8d1 12%, #b5bbc6 16%, #bfc5cc 55%, #d6dcdf 100%); }
    .group h2 { height: 15px; text-align: center; color: #f3f3f3; background: linear-gradient(#a5a8a9, #8d9091); line-height: 15px; }
    .cmds { flex: 1; display: grid; grid-template-rows: 24px 24px; padding: 5px 0 0 3px; align-items: center; justify-items: start; }
    .g-draw { width: 182px; } .g-draw .cmds { grid-template-columns: 56px 58px auto; padding-left: 6px; }
    .g-one { width: 59px; } .g-one .cmds { padding-left: 4px; }
    .g-view { width: 380px; } .g-view .cmds { grid-template-columns: 116px 143px auto; padding-left: 2px; }
    .cmd { height: 17px; padding: 0 1px; gap: 1px; border: 1px solid transparent; }
    .g-draw .cmd, .g-one .cmd { padding: 0; border: 0; }
    .cmd.off { color: #969ba2; }
    .cmd.on { background: linear-gradient(#fbd79c, #f9b65c 55%, #fcc36c); border-color: #a4875c #c9a773 #c9a773 #a4875c; color: #4a3418; }

    .tools { flex: none; height: 20px; border-top: 3px solid #4b4c4e; padding-left: 2px; display: flex; align-items: center; background: linear-gradient(#77797c, #8c8e91); }
    .tools button { width: 17px; height: 17px; justify-content: center; }
    .tools .dd { width: 9px; opacity: 0.6; }
    .tools .sep { width: 2px; }
    .tools .hot { background: linear-gradient(#fbcb84, #f8b356); height: 15px; }
    .tools .wide { width: 44px; justify-content: space-between; border-left: 1px solid #b08850; }

    .main { flex: 1; min-height: 0; display: grid; grid-template-columns: 241px minmax(0, 1fr) 252px; column-gap: 4px; }
    .col { min-height: 0; display: flex; flex-direction: column; }
    .head { flex: none; height: 18px; padding: 0 5px 0 2px; display: flex; align-items: center; gap: 6px; background: linear-gradient(#b4b5b4, #a2a4a3); border: 1px solid #8b8c8c; border-width: 1px 0; color: #5c5c5c; }
    .head h2 { flex: 1; }

    .tree { flex: 1; min-height: 0; overflow: hidden; background: #fff; padding: 2px 0 0 1px; margin-right: 1px; font: 9px/12px "Liberation Sans", Arial, sans-serif; }
    .tree li { height: 12px; display: flex; align-items: center; white-space: nowrap; overflow: hidden; }
    .tree .box { width: 7px; height: 7px; margin: 0 3px; flex: none; position: relative; background: #fff; border: 1px solid #b4b7ba; }
    .tree .box::before { content: ""; position: absolute; inset: 2px 1px; background: #555; }
    .tree .box.plus::after { content: ""; position: absolute; inset: 1px 2px; background: #555; }
    .tree .nobox { width: 13px; height: 12px; flex: none; background: linear-gradient(#dcdcdc, #dcdcdc) 6px 0 / 1px 12px no-repeat, linear-gradient(#dcdcdc, #dcdcdc) 7px 6px / 6px 1px no-repeat; }
    .tree .pad { width: 13px; height: 12px; flex: none; background: linear-gradient(#dcdcdc, #dcdcdc) 6px 0 / 1px 12px no-repeat; }
    .tree .icon { width: 12px; height: 10px; }
    .tree .txt { padding: 0 1px; margin-left: 3px; }
    .tree .sel { background: #ededed; }
    .hscroll { flex: none; height: 13px; display: flex; align-items: center; background: #f0f0f0; margin-right: 1px; padding: 0 4px; justify-content: space-between; }
    .hscroll .track { flex: 1; height: 13px; padding: 0 2px; margin-left: 2px; }
    .hscroll .thumb { width: 54%; height: 13px; background: #cdcdcd; }
    .ptabs { flex: none; height: 18px; display: flex; align-items: flex-start; padding: 1px 0 0 3px; color: #dedede; }
    .ptabs button { height: 15px; padding: 0 2px; margin-right: 3px; gap: 3px; }
    .ptabs .icon { width: 12px; height: 12px; }
    .ptabs .on { background: #eceef1; color: #333; border-radius: 0 0 2px 2px; }

    .doc { background: #c6cfde; border: 1px solid #e3e8f0; border-width: 0 2px 2px; }
    .dtabs { flex: none; height: 20px; display: flex; align-items: flex-end; background: linear-gradient(#b9c0cb, #a6adb8); border-bottom: 2px solid #f0f3f7; padding-left: 3px; }
    .dtabs .nav { width: 12px; height: 16px; }
    .dtab { width: 125px; height: 16px; padding-left: 4px; gap: 17px; color: #3d3f43; border-top: 1px solid #d9dee6; background: linear-gradient(#bcc2cd, #a9afba 50%, #9298a3 60%, #adb4c0); border-left: 1px solid #cdd2db; }
    .dtab.first { width: 135px; padding-left: 14px; clip-path: polygon(14px 0, 100% 0, 100% 100%, 0 100%); }
    .dtab.on { width: 138px; margin-left: -12px; padding-left: 18px; gap: 10px; background: #fff; border: 0; color: #111; font-weight: bold; clip-path: polygon(14px 0, 100% 0, 100% 100%, 0 100%); }
    .dtabs .last { margin-left: auto; margin-right: 2px; }
    .doc schematic-sheet { flex: 1; margin: 4px 8px 3px 9px; }

    .right { row-gap: 4px; }
    .props { flex: none; height: 284px; display: flex; flex-direction: column; background: #e9e9e9; font: 9px/14px "Liberation Sans", Arial, sans-serif; }
    .props .head { font: 9px/12px "Open Sans", "Noto Sans", sans-serif; }
    .pbody { display: flex; background: #f0f0f0; border-bottom: 1px solid #bdbdbd; padding-bottom: 5px; position: relative; }
    table { width: 100%; border-collapse: separate; border-spacing: 0; table-layout: fixed; background: #fff; }
    th { font-weight: normal; text-align: left; height: 18px; padding: 0 4px; background: linear-gradient(#fff, #ececec); border-bottom: 1px solid #d4d4d4; }
    th + th { border-left: 1px solid #c4c4c4; padding-left: 3px; }
    td { height: 14px; padding: 0 0 0 3px; border-bottom: 1px solid #f0f0f0; white-space: nowrap; line-height: 13px; }
    td:first-child { padding-left: 4px; border-left: 14px solid #f0f0f0; }
    td:nth-child(2) { border-left: 1px solid #ececec; }
    .pbody .cat { background: #ededed; color: #8d8d8d; font-weight: bold; border-left: 0; }
    .cat span { display: flex; align-items: center; gap: 6px; }
    .cat i { width: 8px; height: 8px; border: 1px solid #b0b0b0; background: linear-gradient(#888, #888) center / 4px 1px no-repeat; }
    .c1 { width: 126px; } .c3 { width: 14px; }
    .vbar { position: absolute; top: 18px; right: 1px; bottom: 5px; width: 13px; background: #f2f2f2; display: flex; flex-direction: column; align-items: center; padding: 3px 0; gap: 3px; }
    .vbar .thumb { width: 12px; height: 74px; background: linear-gradient(90deg, #ececec, #cfcfcf); border: 1px solid #b4b4b4; border-radius: 1px; margin-bottom: auto; }
    .prev { flex: 1; min-height: 0; display: flex; flex-direction: column; background: #c9d3e2; }
    .prev schematic-sheet { flex: 1; margin: 2px 3px 4px; }

    .status { flex: none; height: 19px; background: #323335; color: #d4d4d4; display: flex; align-items: center; padding: 0 13px 2px 3px; border-top: 2px solid #47484a; border-bottom: 2px solid #e6e6e6; }
    .status .keys { margin-left: auto; display: flex; gap: 3px; color: #7b7b7b; }
    .status .keys span { border-left: 1px solid #505050; padding-left: 2px; }
    .status .keys .lit { color: #f0f0f0; }
  `;

  private tool(t: string) {
    if (t === "|") return html`<span class="sep"></span>`;
    if (t === "v") return html`<button class="dd" aria-label="Więcej">${icon("down", "xs")}</button>`;
    if (t === "SNAP")
      return html`<button class="hot" aria-label="Przyciąganie">${icon("snap", "m")}</button>
        <button class="hot wide" aria-label="Siatka">${icon("grid", "m")}${icon("down", "xs")}</button>`;
    return html`<button aria-label=${t}>${icon(t)}</button>`;
  }

  private head(t: string) {
    return html`<div class="head"><h2>${t}</h2>
      <button aria-label="Przypnij">${icon("pin", "s")}</button><button aria-label="Zamknij">${icon("close", "s")}</button></div>`;
  }

  private node(n: TreeNode) {
    return html`<li class="lvl${n.lvl}">
      ${n.lvl > 0 ? html`<span class="pad"></span>` : nothing}
      ${n.lvl > 1 ? html`<span class="pad"></span>` : nothing}
      ${n.ex ? html`<span class=${classMap({ box: true, plus: n.ex === "+" })}></span>` : html`<span class="nobox"></span>`}
      ${icon(n.ic ?? "bulbs")}<span class=${classMap({ txt: true, sel: !!n.sel })}>${n.t}</span>
    </li>`;
  }

  render() {
    return html`
      <header class="title">
        <button class="orb" aria-label="Menu główne"><svg viewBox="0 0 32 31">
          <defs><radialGradient id="o" cx=".5" cy=".35" r=".7"><stop offset="0" stop-color="#fff" /><stop offset=".7" stop-color="#dcdddf" /><stop offset="1" stop-color="#9c9ea1" /></radialGradient></defs>
          <circle cx="16" cy="15" r="15" fill="url(#o)" stroke="#8e9092" />
          <path d="M9 9l4-1 3 1 4 0 2 3 3 3-1 4 0 3-4-1-3 2-3-2-3-1-1-4-2-3z" fill="#2f9bd9" stroke="#6cc0ee" stroke-width=".8" /></svg></button>
        <h1>SEE Electrical - Przykład 3: 0001</h1>
        <button aria-label="Minimalizuj">${icon("min", "s")}</button>
        <button aria-label="Przywróć">${icon("max", "s")}</button>
        <button aria-label="Zamknij">${icon("close", "s")}</button>
      </header>
      <nav class="menu">
        ${MENU.map((m, i) => html`<button class=${classMap({ tab: true, on: i === 0 })}>${m}</button>`)}
        <div class="end"><button>Styl</button>${icon("downLight", "xs")}<button aria-label="Pomoc">${icon("help", "m")}</button><button aria-label="Informacje">${icon("info", "m")}</button></div>
      </nav>
      <section class="ribbon">
        ${GROUPS.map((g) => html`<div class="group ${g.cls}">
          <div class="cmds">${g.cmds.map((c) => html`<button class=${classMap({ cmd: true, off: !!c.off, on: !!c.on })} ?disabled=${c.off}>${icon(c.icon)}${c.label}</button>`)}</div>
          <h2>${g.title}</h2></div>`)}
      </section>
      <div class="tools">${TOOLS.map((t) => this.tool(t))}</div>
      <main class="main">
        <div class="col">
          ${this.head("Projekt")}
          <ul class="tree">${TREE.map((n) => this.node(n))}</ul>
          <div class="hscroll">${icon("chevL", "xs")}<div class="track"><div class="thumb"></div></div>${icon("chevR", "xs")}</div>
          <div class="ptabs"><button class="on">${icon("expPrj")}Projekt</button><button>${icon("expSym")}Symbole</button><button>${icon("expCode")}Symbole...</button><button>${icon("expCmd")}Polecenia</button></div>
        </div>
        <div class="col doc">
          <div class="dtabs"><button class="nav" aria-label="Poprzednie">${icon("triL", "xs")}</button>
            ${DOCS.map(([ic, t], i) => html`<button class=${classMap({ dtab: true, first: i === 0, on: i === 4 })}>${icon(ic, "m")}<span>${t}</span>${i === 4 ? icon("close", "s") : nothing}</button>`)}
            <button class="nav last" aria-label="Następne">${icon("triR", "xs")}</button></div>
          <schematic-sheet></schematic-sheet>
        </div>
        <div class="col right">
          <section class="props">
            ${this.head("Właściwości")}
            <div class="pbody">
              <table>
                <colgroup><col class="c1" /><col /><col class="c3" /></colgroup>
                <thead><tr><th>Nazwa</th><th colspan="2">Wartość</th></tr></thead>
                <tbody><tr><td class="cat" colspan="3"><span><i></i>Atrybuty - 0001</span></td></tr>
                  ${PROPS.map(([k, v]) => html`<tr><td>${k}</td><td>${v}</td><td></td></tr>`)}</tbody>
              </table>
              <div class="vbar">${icon("triU", "xs")}<div class="thumb"></div>${icon("triD", "xs")}</div>
            </div>
          </section>
          <section class="prev">${this.head("Podgląd")}<schematic-sheet preview></schematic-sheet></section>
        </div>
      </main>
      <footer class="status">Pomoc, naciśnij F1<div class="keys"><span>CAP</span><span class="lit">NUM</span><span>SCRL</span></div></footer>`;
  }
}
